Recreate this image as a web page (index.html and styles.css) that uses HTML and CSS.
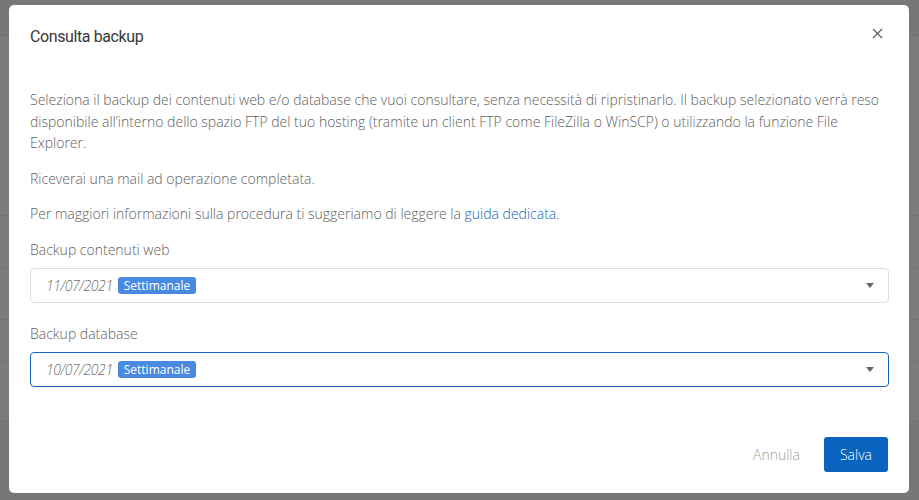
FILE: index.html
```html
<!DOCTYPE html>
<html lang="it">
<head>
<meta charset="utf-8">
<title>Consulta backup</title>
<link rel="stylesheet" href="styles.css">
</head>
<body>
<div class="page-behind">
  <div class="pb-top"></div>
  <div class="pb-gap"></div>
  <div class="pb-row r1"></div>
  <div class="pb-row r2"></div>
  <div class="pb-row r3"></div>
  <div class="pb-row r4"></div>
  <div class="pb-row r5"></div>
  <div class="pb-footer"></div>
</div>
<div class="modal" role="dialog" aria-labelledby="mtitle">
  <div class="modal-header">
    <h2 id="mtitle" class="modal-title">Consulta backup</h2>
    <button class="close" aria-label="Chiudi">
      <svg width="11" height="11" viewBox="0 0 11 11"><path d="M1 1L10 10M10 1L1 10" stroke="#5f5f5f" stroke-width="1.3" fill="none"/></svg>
    </button>
  </div>
  <div class="modal-body">
    <p class="text">Seleziona il backup dei contenuti web e/o database che vuoi consultare, senza necessità di ripristinarlo. Il backup selezionato verrà reso disponibile all’interno dello spazio FTP del tuo hosting (tramite un client FTP come FileZilla o WinSCP) o utilizzando la funzione File Explorer.</p>
    <p class="text">Riceverai una mail ad operazione completata.</p>
    <p class="text">Per maggiori informazioni sulla procedura ti suggeriamo di leggere la <a href="#" class="link">guida dedicata</a>.</p>
    <div class="field">
      <label class="label">Backup contenuti web</label>
      <div class="select">
        <span class="date">11/07/2021</span><span class="badge">Settimanale</span>
        <span class="caret"></span>
      </div>
    </div>
    <div class="field">
      <label class="label">Backup database</label>
      <div class="select focused">
        <span class="date">10/07/2021</span><span class="badge">Settimanale</span>
        <span class="caret"></span>
      </div>
    </div>
  </div>
  <div class="modal-footer">
    <button class="btn-link">Annulla</button>
    <button class="btn-primary">Salva</button>
  </div>
</div>
</body>
</html>
```
FILE: styles.css
```css
html, body {
  margin: 0;
  padding: 0;
  height: 500px;
  overflow: hidden;
}
body {
  background: #7b7b7b;
  font-family: "Open Sans", sans-serif;
  font-weight: 300;
  position: relative;
}
.page-behind {
  display: flex;
  flex-direction: column;
  height: 500px;
}
.pb-top {
  height: 35px;
  border-bottom: 1px solid #6e6e6e;
  background: #777;
}
.pb-gap { height: 142px; }
.pb-row { border-bottom: 1px solid #727272; }
.r1 { height: 37px; }
.r2 { height: 51px; }
.r3 { height: 51px; }
.r4 { height: 41px; }
.r5 { height: 58px; }
.pb-footer { flex: 1; background: #777; }

.modal {
  position: absolute;
  left: 9px;
  top: 5px;
  width: 900px;
  height: 488px;
  background: #fff;
  border-radius: 5px;
  box-sizing: border-box;
  display: flex;
  flex-direction: column;
}
.modal-header {
  display: flex;
  justify-content: space-between;
  align-items: flex-start;
  padding: 20px 20px 0 21px;
}
.modal-title {
  margin: 0;
  font-family: Roboto, "Open Sans", sans-serif;
  font-weight: 400;
  font-size: 16px;
  line-height: 24px;
  color: #383838;
  letter-spacing: -0.4px;
}
.close {
  border: 0;
  background: none;
  padding: 0;
  margin: 3px 6px 0 0;
  width: 11px;
  height: 11px;
  display: flex;
}
.modal-body {
  padding: 40px 20px 0 21px;
}
.text {
  margin: 0 0 14px;
  font-size: 14px;
  line-height: 21.5px;
  color: #5e5e5e;
}
.link {
  color: #1565c0;
  text-decoration: none;
}
.field { margin-bottom: 20px; }
.label {
  display: block;
  font-size: 14px;
  line-height: 22px;
  color: #5e5e5e;
  margin-bottom: 7px;
}
.select {
  height: 35px;
  box-sizing: border-box;
  border: 1px solid #dedede;
  border-radius: 4px;
  display: flex;
  align-items: center;
  padding: 0 14px 0 15px;
}
.select.focused {
  border-color: #1565c0;
  margin-top: 1px;
}
.date {
  font-style: italic;
  font-size: 14px;
  letter-spacing: -0.4px;
  color: #6e6e6e;
  margin-right: 5px;
}
.badge {
  background: #4a89e0;
  color: #fff;
  font-weight: 400;
  font-size: 12px;
  line-height: 17px;
  padding: 0 6px;
  border-radius: 3px;
}
.caret {
  margin-left: auto;
  width: 0;
  height: 0;
  border-left: 4.5px solid transparent;
  border-right: 4.5px solid transparent;
  border-top: 5px solid #666;
}
.modal-footer {
  margin-top: auto;
  display: flex;
  justify-content: flex-end;
  align-items: center;
  padding: 0 21px 21px;
}
.btn-link {
  border: 0;
  background: none;
  font-family: "Open Sans", sans-serif;
  font-weight: 300;
  font-size: 14px;
  color: #a0a0a0;
  padding: 0 12px;
  margin-right: 12px;
  height: 35px;
}
.btn-primary {
  border: 0;
  background: #0a63bf;
  color: #fff;
  font-family: "Open Sans", sans-serif;
  font-weight: 300;
  font-size: 14px;
  height: 35px;
  padding: 0 16px;
  border-radius: 3px;
}
```
